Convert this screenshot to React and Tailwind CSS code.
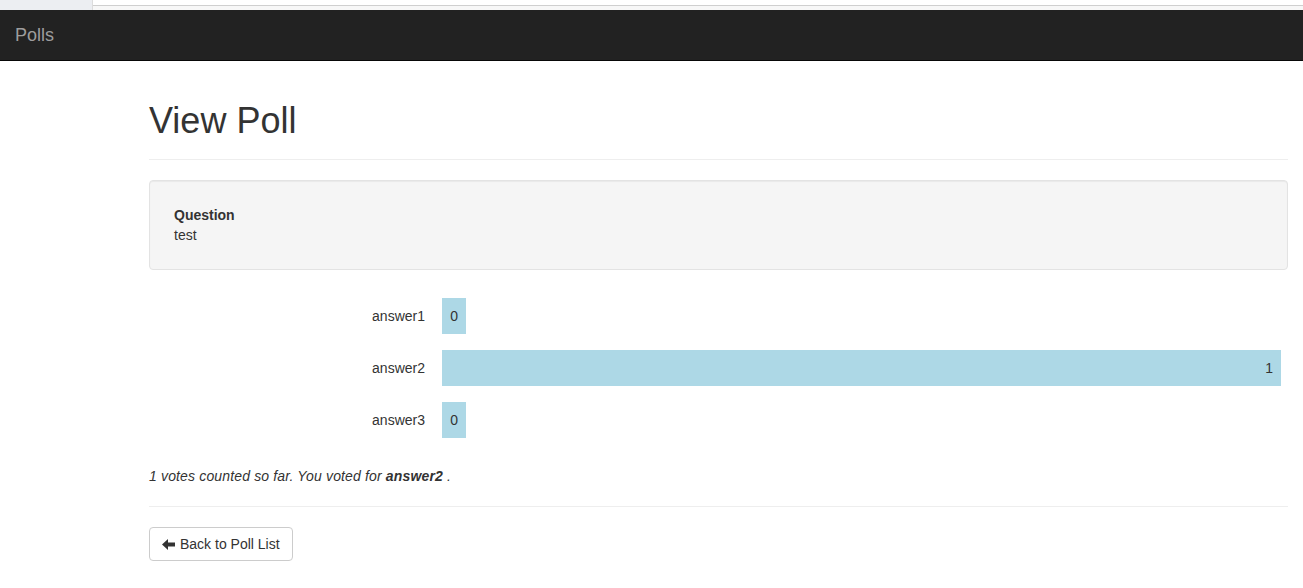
const answers = [
  { name: "answer1", votes: 0 },
  { name: "answer2", votes: 1 },
  { name: "answer3", votes: 0 },
];

const ArrowLeft = () => (
  <svg width="13" height="11" viewBox="0 0 13 11" className="mr-[5px]">
    <path d="M0 5.5 L6 0 L6 3.5 L13 3.5 L13 7.5 L6 7.5 L6 11 Z" fill="#333" />
  </svg>
);

const App = () => {
  const total = answers.reduce((s, a) => s + a.votes, 0);
  const max = Math.max(...answers.map((a) => a.votes), 1);

  return (
    <div
      className="min-h-[588px] bg-white text-[14px] leading-[20px] text-[#333]"
      style={{ fontFamily: '"Liberation Sans", Arial, sans-serif' }}
    >
      {/* browser chrome remnant */}
      <div className="flex h-[10px] bg-[#eceef2]">
        <div className="w-[93px] border-r border-[#dcdcdc]" />
        <div className="flex-1 bg-[#f7f7f7]">
          <div className="h-[6px] border-b border-[#cfcfcf] bg-white" />
        </div>
      </div>

      {/* navbar */}
      <div className="flex h-[51px] items-center border-b border-[#080808] bg-[#222] px-[15px]">
        <span className="text-[18px] text-[#9d9d9d]">Polls</span>
      </div>

      <div className="pl-[149px] pr-[15px]">
        <div className="mt-[40px] border-b border-[#eee] pb-[18px]">
          <h1 className="text-[36px] leading-[40px] font-normal">View Poll</h1>
        </div>

        <div className="mt-[20px] rounded-[4px] border border-[#e3e3e3] bg-[#f5f5f5] px-[24px] py-[24px] shadow-[inset_0_1px_1px_rgba(0,0,0,0.05)]">
          <div className="font-bold">Question</div>
          <div>test</div>
        </div>

        <div className="mt-[28px] flex flex-col gap-[16px]">
          {answers.map((a) => (
            <div key={a.name} className="flex items-center">
              <div className="w-[293px] pr-[17px] text-right">{a.name}</div>
              <div className="mr-[7px] flex-1">
                <div
                  className="flex h-[36px] min-w-[24px] items-center justify-end bg-[#add8e6] px-[8px]"
                  style={{ width: a.votes ? `${(a.votes / max) * 100}%` : "24px" }}
                >
                  {a.votes}
                </div>
              </div>
            </div>
          ))}
        </div>

        <p className="mt-[28px] italic tracking-[0.15px]">
          {total} votes counted so far. You voted for <b>answer2</b> .
        </p>

        <hr className="mt-[20px] border-[#eee]" />

        <button className="mt-[20px] flex h-[34px] items-center rounded-[4px] border border-[#ccc] bg-white px-[12px]">
          <ArrowLeft />
          Back to Poll List
        </button>
      </div>
    </div>
  );
};

export default App;
